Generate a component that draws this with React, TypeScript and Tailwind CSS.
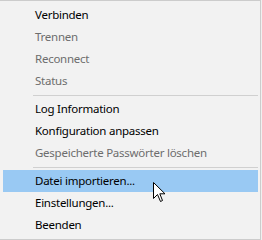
import React from "react";

type Item = { label: string; disabled?: boolean; hover?: boolean } | "sep";

const items: Item[] = [
  { label: "Verbinden" },
  { label: "Trennen", disabled: true },
  { label: "Reconnect", disabled: true },
  { label: "Status", disabled: true },
  "sep",
  { label: "Log Information" },
  { label: "Konfiguration anpassen" },
  { label: "Gespeicherte Passwörter löschen", disabled: true },
  "sep",
  { label: "Datei importieren...", hover: true },
  { label: "Einstellungen..." },
  { label: "Beenden" },
];

function Cursor() {
  return (
    <svg
      className="absolute left-[153px] top-[182px]"
      width="13"
      height="21"
      viewBox="0 0 13 21"
    >
      <path
        d="M0.5 0.5 L0.5 16.5 L4.5 12.5 L7.5 19.5 L9.5 18.5 L6.8 11.8 L12 11.8 Z"
        fill="#ffffff"
        stroke="#000000"
        strokeWidth="1"
        strokeLinejoin="miter"
      />
    </svg>
  );
}

export default function App() {
  return (
    <div className="w-[262px] h-[240px] bg-[#f0f0f0] relative">
      <div
        className="w-[261px] h-[240px] bg-[#f2f2f2] border-t border-r border-b border-[#cccccc] pt-[3px] pl-[3px] pr-[2px] text-[11.5px] tracking-[-0.25px]"
        style={{ fontFamily: '"Noto Sans", "Open Sans", sans-serif' }}
      >
        {items.map((it, i) =>
          it === "sep" ? (
            <div key={i} className="h-[6px] flex items-center pl-[30px]">
              <div className="w-full border-t border-[#d0d0d0]" />
            </div>
          ) : (
            <div
              key={i}
              className={`h-[22px] flex items-center pl-[32px] ${
                it.hover ? "bg-[#99c9f3]" : ""
              } ${it.disabled ? "text-[#6d6d6d]" : "text-black"}`}
            >
              {it.label}
            </div>
          )
        )}
      </div>
      <Cursor />
    </div>
  );
}
